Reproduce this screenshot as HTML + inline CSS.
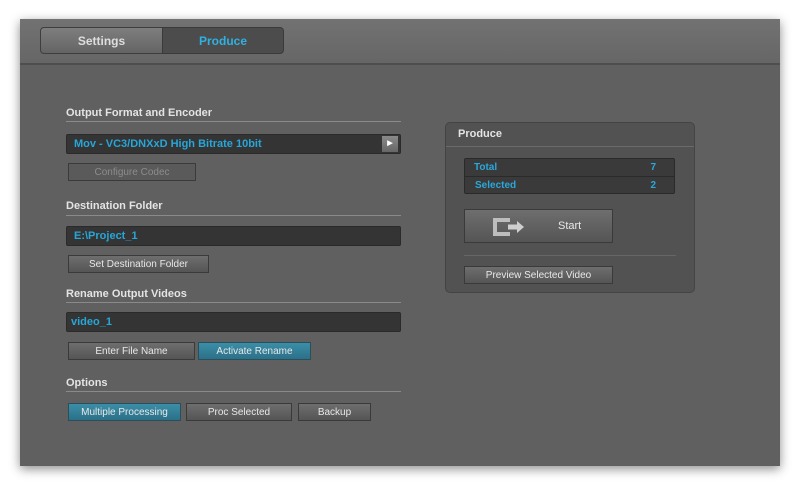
<!DOCTYPE html>
<html><head><style>
*{margin:0;padding:0;box-sizing:border-box}
body{width:800px;height:486px;background:#fff;position:relative;font-family:"Liberation Sans",sans-serif;overflow:hidden}
.win{position:absolute;left:20px;top:19px;width:760px;height:447px;background:#606060;box-shadow:0 3px 10px rgba(0,0,0,.45)}
.hdr{position:absolute;left:0;top:0;width:760px;height:46px;background:linear-gradient(#727272,#666);border-bottom:2px solid #4e4e4e}
.a{position:absolute}
.tab{position:absolute;top:8px;height:27px;font-size:12px;font-weight:bold;text-align:center;line-height:26px}
.lbl{position:absolute;left:46px;font-size:11px;font-weight:bold;color:#e4e4e4}
.ln{position:absolute;left:46px;width:335px;height:1px;background:#8a8a8a}
.fld{position:absolute;left:46px;width:335px;height:20px;background:#343434;border:1px solid #2a2a2a;border-radius:2px;color:#27a6d8;font-weight:bold;font-size:11px;line-height:18px;padding-left:7px}
.btn{position:absolute;height:18px;background:linear-gradient(#6e6e6e,#555);border:1px solid #3a3a3a;color:#e8e8e8;font-size:10px;text-align:center;line-height:17px}
.blue{background:linear-gradient(#3c8ea8,#2b7088);border-color:#2a4e5a}
</style></head><body>
<div class="win">
<div class="hdr"></div>
<div class="tab" style="left:20px;width:123px;background:linear-gradient(#7e7e7e,#646464);border:1px solid #3e3e3e;border-radius:4px 0 0 4px;color:#dedede">Settings</div>
<div class="tab" style="left:142px;width:122px;background:#4c4c4c;border:1px solid #3a3a3a;border-radius:0 4px 4px 0;color:#2fb1e3">Produce</div>

<div class="lbl" style="top:88px">Output Format and Encoder</div>
<div class="ln" style="top:102px"></div>
<div class="fld" style="top:115px">Mov - VC3/DNXxD High Bitrate 10bit
<div class="a" style="right:2px;top:1px;width:16px;height:16px;background:linear-gradient(#8a8a8a,#666);color:#fff;font-size:7px;line-height:16px;text-align:center">▶</div></div>
<div class="btn" style="left:48px;top:144px;width:128px;color:#8c8c8c;background:#5a5a5a">Configure Codec</div>

<div class="lbl" style="top:181px">Destination Folder</div>
<div class="ln" style="top:196px"></div>
<div class="fld" style="top:207px">E:\Project_1</div>
<div class="btn" style="left:48px;top:236px;width:141px">Set Destination Folder</div>

<div class="lbl" style="top:269px">Rename Output Videos</div>
<div class="ln" style="top:283px"></div>
<div class="fld" style="top:293px;padding-left:4px">video_1</div>
<div class="btn" style="left:48px;top:323px;width:127px">Enter File Name</div>
<div class="btn blue" style="left:178px;top:323px;width:113px">Activate Rename</div>

<div class="lbl" style="top:358px">Options</div>
<div class="ln" style="top:372px"></div>
<div class="btn blue" style="left:48px;top:384px;width:113px">Multiple Processing</div>
<div class="btn" style="left:166px;top:384px;width:106px">Proc Selected</div>
<div class="btn" style="left:278px;top:384px;width:73px">Backup</div>

<div class="a" style="left:425px;top:103px;width:250px;height:171px;background:#525252;border:1px solid #444;border-radius:5px">
 <div class="a" style="left:12px;top:5px;font-size:11px;font-weight:bold;color:#e4e4e4">Produce</div>
 <div class="a" style="left:0;top:23px;width:248px;height:1px;background:#6a6a6a"></div>
 <div class="a" style="left:18px;top:35px;width:211px;height:36px;background:#3a3a3a;border:1px solid #2a2a2a;border-radius:2px;color:#2aa8db;font-size:10px;font-weight:bold">
  <div class="a" style="left:9px;top:3px">Total</div><div class="a" style="right:18px;top:3px">7</div>
  <div class="a" style="left:0;top:17px;width:209px;height:1px;background:#2a2a2a"></div>
  <div class="a" style="left:10px;top:21px">Selected</div><div class="a" style="right:18px;top:21px">2</div>
 </div>
 <div class="btn" style="left:18px;top:86px;width:149px;height:34px;line-height:32px">
  <svg class="a" style="left:27px;top:7px" width="36" height="20" viewBox="0 0 36 20"><path d="M18 3H3V17H18" fill="none" stroke="#bdbdbd" stroke-width="4"/><path d="M16 7.5H25V4L32 10L25 16V12.5H16Z" fill="#cfcfcf"/></svg>
  <span style="position:absolute;left:93px;font-size:11px">Start</span></div>
 <div class="a" style="left:18px;top:132px;width:212px;height:1px;background:#666"></div>
 <div class="btn" style="left:18px;top:143px;width:149px">Preview Selected Video</div>
</div>
</div>
</body></html>
